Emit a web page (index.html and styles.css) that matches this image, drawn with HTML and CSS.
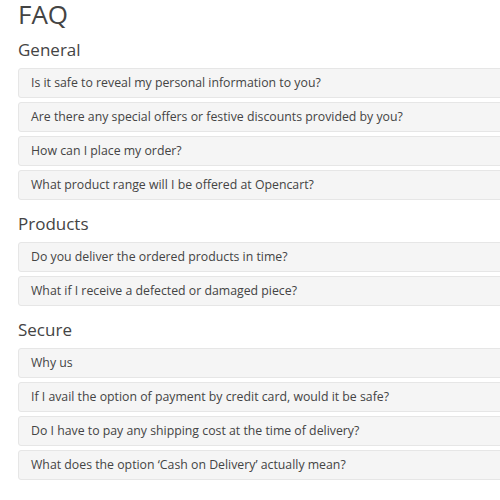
FILE: index.html
```html
<!DOCTYPE html>
<html>
<head>
    <title>FAQ</title>
    <link rel="stylesheet" href="styles.css">
</head>
<body>
    <div class="page">
        <h1>FAQ</h1>

        <div class="faq-group">
            <h2>General</h2>
            <div class="faq-item">Is it safe to reveal my personal information to you?</div>
            <div class="faq-item">Are there any special offers or festive discounts provided by you?</div>
            <div class="faq-item">How can I place my order?</div>
            <div class="faq-item">What product range will I be offered at Opencart?</div>
        </div>

        <div class="faq-group">
            <h2>Products</h2>
            <div class="faq-item">Do you deliver the ordered products in time?</div>
            <div class="faq-item">What if I receive a defected or damaged piece?</div>
        </div>

        <div class="faq-group">
            <h2>Secure</h2>
            <div class="faq-item">Why us</div>
            <div class="faq-item">If I avail the option of payment by credit card, would it be safe?</div>
            <div class="faq-item">Do I have to pay any shipping cost at the time of delivery?</div>
            <div class="faq-item">What does the option ‘Cash on Delivery’ actually mean?</div>
        </div>
    </div>
</body>
</html>
```

FILE: styles.css
```css
html, body {
    overflow: hidden;
}
body {
    font-family: "Open Sans", "Liberation Sans", sans-serif;
    background: #fff;
    color: #444;
    margin: 0;
    padding: 0 0 0 18px;
}
.page {
    margin-right: -20px;
}
h1 {
    font-size: 26px;
    font-weight: normal;
    line-height: 28px;
    color: #444;
    margin: 0 0 12px;
}
.faq-group {
    margin-bottom: 14px;
}
h2 {
    font-size: 17px;
    font-weight: normal;
    line-height: 20px;
    color: #444;
    margin: 0 0 8px;
}
.faq-item {
    background: #f5f5f5;
    border: 1px solid #e6e6e6;
    border-radius: 3px;
    padding: 0 12px;
    height: 28px;
    line-height: 28px;
    font-size: 12.3px;
    color: #444;
    margin-bottom: 4px;
}
```
